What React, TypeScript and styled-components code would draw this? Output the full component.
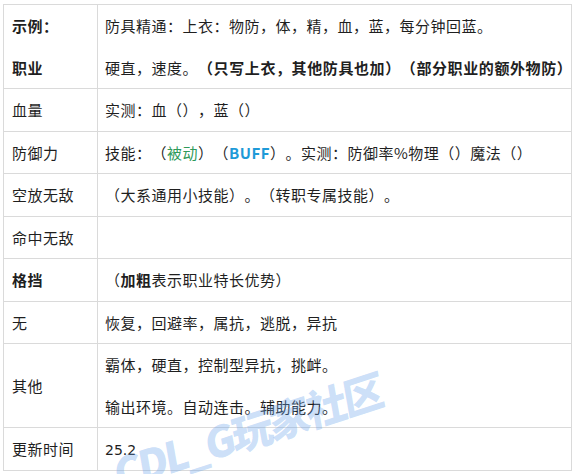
import React from "react";
import styled, { createGlobalStyle } from "styled-components";

const GlobalStyle = createGlobalStyle`
  html, body {
    margin: 0;
    padding: 0;
    background: #fff;
  }
  body {
    font-family: "Noto Sans CJK SC", "Noto Sans", sans-serif;
    color: #1f1f1f;
    text-spacing-trim: space-all;
  }
`;

const Page = styled.div`
  position: relative;
  width: 576px;
  height: 474px;
  overflow: hidden;
  padding: 4px 0 0 3px;
  box-sizing: border-box;
`;

const Table = styled.table`
  width: 569px;
  border-collapse: collapse;
  table-layout: fixed;
  font-size: 15px;
  letter-spacing: 0.5px;
`;

const LabelCell = styled.td<{ $bold?: boolean }>`
  width: 77px;
  border: 1px solid #dadada;
  padding: 0 8px;
  vertical-align: middle;
  font-weight: ${(p) => (p.$bold ? 700 : 400)};
`;

const ValueCell = styled.td`
  border: 1px solid #dadada;
  padding: 0 7px;
  vertical-align: middle;
`;

const Line = styled.div`
  height: 41.5px;
  line-height: 41.5px;
  white-space: nowrap;
`;

const Strong = styled.b`
  font-weight: 700;
  letter-spacing: 0.6px;
`;

const Passive = styled.span`
  color: #2f9a5a;
`;

const Buff = styled.span`
  color: #1e9ad8;
  font-weight: 700;
`;

const Number = styled.span`
  font-family: "DejaVu Sans", sans-serif;
  font-size: 14px;
  letter-spacing: 0;
`;

const Watermark = styled.div`
  position: absolute;
  left: 118px;
  top: 452px;
  line-height: 42px;
  transform: rotate(-18deg) skewX(-8deg);
  transform-origin: left bottom;
  font-family: "Noto Sans CJK SC", "DejaVu Sans", sans-serif;
  font-size: 42px;
  font-weight: 900;
  letter-spacing: -3px;
  color: rgba(110, 165, 235, 0.36);
  white-space: nowrap;
  pointer-events: none;
`;

const rows: { label: React.ReactNode; bold?: boolean; value: React.ReactNode[] }[] = [
  {
    label: [<Line key="a">示例：</Line>, <Line key="b">职业</Line>],
    bold: true,
    value: [
      "防具精通：上衣：物防，体，精，血，蓝，每分钟回蓝。",
      <>
        硬直，速度。<Strong>（只写上衣，其他防具也加）（部分职业的额外物防）</Strong>
      </>,
    ],
  },
  { label: "血量", value: ["实测：血（），蓝（）"] },
  {
    label: "防御力",
    value: [
      <>
        技能：（<Passive>被动</Passive>）（<Buff>BUFF</Buff>）。实测：防御率%物理（）魔法（）
      </>,
    ],
  },
  { label: "空放无敌", value: ["（大系通用小技能）。（转职专属技能）。"] },
  { label: "命中无敌", value: [""] },
  {
    label: "格挡",
    bold: true,
    value: [
      <>
        （<b>加粗</b>表示职业特长优势）
      </>,
    ],
  },
  { label: "无", value: ["恢复，回避率，属抗，逃脱，异抗"] },
  { label: "其他", value: ["霸体，硬直，控制型异抗，挑衅。", "输出环境。自动连击。辅助能力。"] },
  { label: "更新时间", value: [<Number>25.2</Number>] },
];

export default function App() {
  return (
    <>
      <GlobalStyle />
      <Page>
        <Table>
          <tbody>
            {rows.map((row, i) => (
              <tr key={i}>
                <LabelCell $bold={row.bold}>
                  {Array.isArray(row.label) ? row.label : <Line>{row.label}</Line>}
                </LabelCell>
                <ValueCell>
                  {row.value.map((v, j) => (
                    <Line key={j}>{v}</Line>
                  ))}
                </ValueCell>
              </tr>
            ))}
          </tbody>
        </Table>
        <Watermark>CDL_G玩家社区</Watermark>
      </Page>
    </>
  );
}
